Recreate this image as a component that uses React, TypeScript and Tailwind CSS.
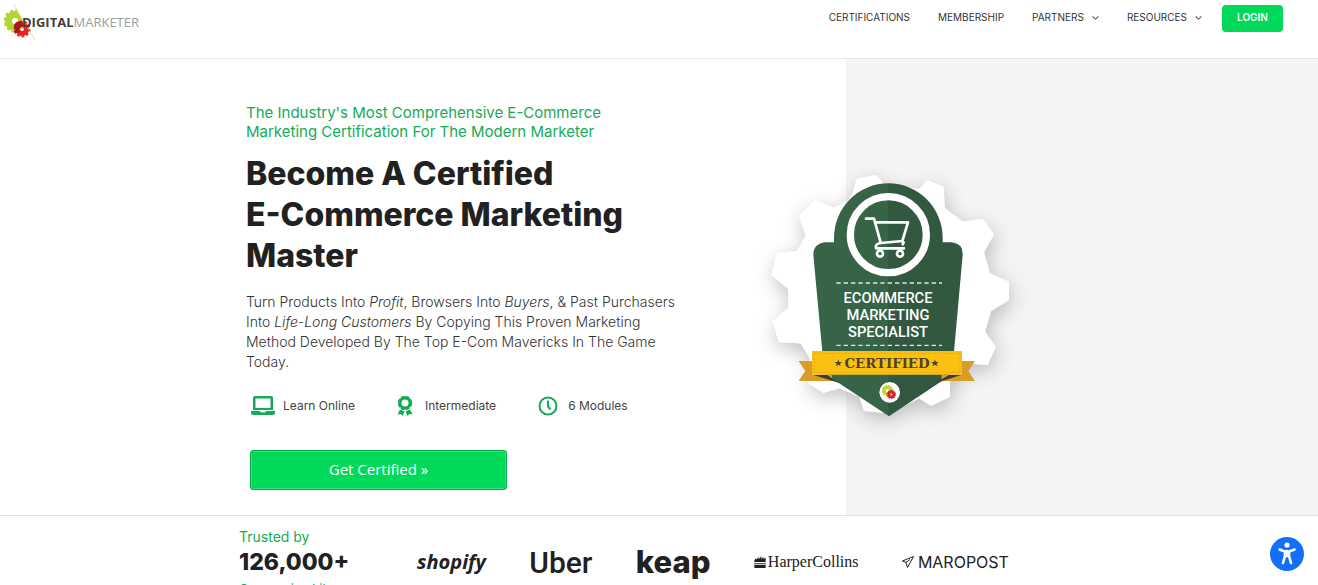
import { FaChevronDown } from "react-icons/fa6";

const navLinks = [
  { label: "Certifications", menu: false },
  { label: "Membership", menu: false },
  { label: "Partners", menu: true },
  { label: "Resources", menu: true },
];

function Gears() {
  return (
    <g>
      <circle cx="13" cy="15" r="6" fill="none" stroke="#bfd62f" strokeWidth="6" />
      <circle
        cx="13"
        cy="15"
        r="9"
        fill="none"
        stroke="#bfd62f"
        strokeWidth="3"
        strokeDasharray="2.8 1.91"
      />
      <circle cx="20" cy="22" r="4.500" fill="none" stroke="#e01f26" strokeWidth="5" />
      <circle
        cx="20"
        cy="22"
        r="7.500"
        fill="none"
        stroke="#e01f26"
        strokeWidth="2"
        strokeDasharray="2.7 2.01"
      />
    </g>
  );
}

function Logo() {
  return (
    <a href="#" aria-label="DigitalMarketer" className="flex items-center">
      <svg viewBox="0 0 32 36" className="h-9 w-8 shrink-0">
        <clipPath id="cut">
          <path d="M0 0H9L30 36H0Z" />
        </clipPath>
        <g clipPath="url(#cut)">
          <circle cx="11" cy="17" r="6.500" fill="none" stroke="#b5d334" strokeWidth="7" />
          <circle
            cx="11"
            cy="17"
            r="10"
            fill="none"
            stroke="#b5d334"
            strokeWidth="3"
            strokeDasharray="3.2 2.03"
          />
        </g>
        <circle cx="18" cy="25" r="4.500" fill="none" stroke="#ea2127" strokeWidth="5" />
        <circle
          cx="18"
          cy="25"
          r="7.500"
          fill="none"
          stroke="#ea2127"
          strokeWidth="2"
          strokeDasharray="2.7 2.01"
        />
        <path d="M10 21a8 8 0 0 1 7-4l4 6-3-1-3 3 1 3-5 1Z" fill="#a8181f" />
        <path d="M10 1 31 36" stroke="#c7dd63" strokeWidth="1" strokeDasharray="2 1" />
      </svg>
      <span className="-ml-3.5 font-['Open_Sans'] text-[13px] leading-none text-[#9b9c9e]">
        <b className="text-[#3f3f41]">DIGITAL</b>MARKETER
      </span>
    </a>
  );
}

function Header() {
  return (
    <header className="flex h-[59px] shrink-0 items-start justify-between border-b border-[#e6e6e6] pr-[35px] pl-1">
      <div className="pt-1">
        <Logo />
      </div>
      <nav className="flex items-center gap-7 pt-[5px]">
        {navLinks.map((link) => (
          <a
            key={link.label}
            href="#"
            className="flex items-center gap-2 pb-0.5 text-[10px] text-[#333] uppercase"
          >
            {link.label}
            {link.menu && <FaChevronDown className="size-[7px]" />}
          </a>
        ))}
        <a
          href="#"
          className="-ml-2 flex h-[27px] w-[61px] items-center justify-center rounded bg-[#00d95a] pb-0.5 text-[10px] font-semibold text-white"
        >
          LOGIN
        </a>
      </nav>
    </header>
  );
}

function Badge() {
  return (
    <svg
      viewBox="0 0 780 810"
      className="h-[270px] w-[260px] overflow-visible"
      role="img"
      aria-label="Ecommerce Marketing Specialist, Certified"
    >
      <defs>
        <filter id="shade" x="-20%" y="-20%" width="140%" height="140%">
          <feDropShadow dx="4" dy="18" stdDeviation="28" floodColor="#000" floodOpacity="0.24" />
        </filter>
        <linearGradient id="shield">
          <stop offset="50%" stopColor="#376346" />
          <stop offset="50%" stopColor="#325940" />
        </linearGradient>
      </defs>
      <path
        filter="url(#shade)"
        fill="#fff"
        d="M278 85 290 42 348 30 375 60 478 72 502 45 550 65 555 130 608 170 668 162 702 208 672 262 690 325 747 350V405L693 438 675 500 707 545 683 600 620 595 570 650V695L513 722 478 700 385 745 312 737 298 695 240 670 190 683 145 655 150 580 122 535 57 532 38 468 85 430V372L35 330 50 265 112 258 137 212 118 153 165 105 222 128 262 110Z"
      />
      <path
        fill="url(#shield)"
        d="M222 232V218A162 162 0 0 1 548 218V232H575Q610 236 608 270L582 560 600 600 550 645 387 754 215 640 160 600 187 560 160 270Q160 236 196 232Z"
      />
      <circle cx="385" cy="209" r="114" fill="none" stroke="#fff" strokeWidth="22" />
      <g fill="none" stroke="#fff" strokeWidth="8" strokeLinecap="round" strokeLinejoin="round">
        <path d="M318 161H342L362 233M349 172H444L427 228 362 234Q345 236 348 250H432M428 238 431 232" />
        <circle cx="360" cy="266" r="9" />
        <circle cx="420" cy="266" r="9" />
      </g>
      <g stroke="#dfe8e1" strokeWidth="4" strokeDasharray="13 9">
        <path d="M229 354H546" />
        <path d="M229 541H546" />
      </g>
      <g
        fill="#fff"
        textAnchor="middle"
        className="font-['Roboto'] text-[44px] font-medium"
      >
        <text x="384" y="413">ECOMMERCE</text>
        <text x="384" y="465">MARKETING</text>
        <text x="384" y="517">SPECIALIST</text>
      </g>
      <path fill="#d99c27" d="M116 588H158V630H216V648H116L136 618ZM645 588H605V630H545V648H645L625 618Z" />
      <path fill="#3b3c34" d="M158 629H200L240 655ZM606 629H568L525 655Z" />
      <path fill="#fbc112" d="M156 558H606V629H156Z" />
      <path fill="none" stroke="#d79c1c" strokeWidth="2" strokeDasharray="6 4" d="M162 565H600V622H162Z" />
      <path
        fill="#4b4330"
        d="m235 584 3 7h8l-6 5 2 8-7-5-7 5 2-8-6-5h8ZM525 584l3 7h8l-6 5 2 8-7-5-7 5 2-8-6-5h8Z"
      />
      <text
        x="381"
        y="608"
        fill="#4b4330"
        textAnchor="middle"
        className="font-['DejaVu_Serif'] text-[40px] font-bold"
      >
        CERTIFIED
      </text>
      <circle cx="389" cy="682" r="31" fill="#fff" />
      <g transform="translate(361 652) scale(1.65)">
        <Gears />
      </g>
    </svg>
  );
}

function LaptopIcon() {
  return (
    <svg viewBox="0 0 24 20" className="h-5 w-6 text-[#14ab55]">
      <path
        fill="currentColor"
        fillRule="evenodd"
        d="M4 0H20Q22 0 22 2V14H2V2Q2 0 4 0ZM4.500 2.500V12H19.500V2.500ZM0 15H9Q9.500 16.500 11 16.500H13Q14.500 16.500 15 15H24V16.500Q24 19 21.500 19H2.500Q0 19 0 16.500Z"
      />
    </svg>
  );
}

function AwardIcon() {
  return (
    <svg viewBox="0 0 16 20" className="h-5 w-4 text-[#14ab55]">
      <circle cx="8" cy="7" r="5" fill="none" stroke="currentColor" strokeWidth="3" />
      <circle
        cx="8"
        cy="7"
        r="6.500"
        fill="none"
        stroke="currentColor"
        strokeWidth="1.500"
        strokeDasharray="4.100 1"
      />
      <path fill="currentColor" d="M3 13.500 7.500 15.500 5.500 20 3.500 18 .500 18.500ZM13 13.500 8.500 15.500 10.500 20 12.500 18 15.500 18.500Z" />
    </svg>
  );
}

function ClockIcon() {
  return (
    <svg viewBox="0 0 20 20" className="size-5 text-[#14ab55]" fill="none" stroke="currentColor">
      <circle cx="10" cy="10" r="8.500" strokeWidth="2" />
      <path d="M10 4.500V10.500L12.500 13.500" strokeWidth="2" />
    </svg>
  );
}

function Hero() {
  return (
    <section className="shrink-0 border-b border-[#e2e2e2] bg-[linear-gradient(to_right,#fff_64.2%,#f4f4f4_64.2%)]">
      <div className="mx-auto flex max-w-[826px]">
        <div className="w-[56%] pt-11 pb-[25px]">
          <p className="text-[15px] leading-[19px] text-[#14ab55]">
            The Industry&apos;s Most Comprehensive E-Commerce
            <br />
            Marketing Certification For The Modern Marketer
          </p>
          <h1 className="mt-3 text-[32px] leading-[41px] font-extrabold text-[#212121]">
            Become A Certified
            <br />
            E-Commerce Marketing
            <br />
            Master
          </h1>
          <p className="mt-4 text-[14px] leading-5 font-light text-[#333]">
            Turn Products Into <em>Profit</em>, Browsers Into <em>Buyers</em>, &amp; Past Purchasers
            <br />
            Into <em>Life-Long Customers</em> By Copying This Proven Marketing
            <br />
            Method Developed By The Top E-Com Mavericks In The Game
            <br />
            Today.
          </p>
          <ul className="mt-[22px] flex gap-[42px] pl-[5px] text-[12px] leading-6 text-[#444]">
            <li className="flex items-center gap-2">
              <LaptopIcon />
              Learn Online
            </li>
            <li className="flex items-center gap-3">
              <AwardIcon />
              Intermediate
            </li>
            <li className="flex items-center gap-2.5">
              <ClockIcon />6 Modules
            </li>
          </ul>
          <button className="mt-8 ml-1 h-10 w-[257px] rounded-[3px] border border-[#00b04a] bg-[#00d95a] pb-0.5 font-['Open_Sans'] text-[15px] text-white shadow-[inset_0_0_0_1px_#2de27a]">
            Get Certified »
          </button>
        </div>
        <div className="flex flex-1 items-center justify-center pt-[26px]">
          <Badge />
        </div>
      </div>
    </section>
  );
}

function Trusted() {
  return (
    <section className="mx-auto flex w-full max-w-[840px] items-start pt-3">
      <div className="w-[178px] shrink-0">
        <p className="text-[14px] leading-[18px] text-[#14ab55]">Trusted by</p>
        <p className="text-[23px] leading-8 font-extrabold text-[#212121]">126,000+</p>
        <p className="mt-0.5 text-[13px] leading-[18px] text-[#14ab55]">Companies Like</p>
      </div>
      <div className="flex h-[68px] flex-1 items-center justify-between pr-[70px] text-[#212121]">
        <span className="font-['Open_Sans'] text-[20px] font-bold italic">shopify</span>
        <span className="font-['Roboto'] text-[30px] font-medium">Uber</span>
        <span className="text-[31px] font-extrabold">keap</span>
        <span className="flex items-center gap-0.5 font-['Liberation_Serif'] text-[16px]">
          <svg viewBox="0 0 36 36" className="size-3" fill="currentColor">
            <path d="M1 12 7 6 7 11 14 3 14 10 22 0 21 9 29 2 28 9 35 5V18H1ZM0 21H36V23H0ZM1 26H35V36H1Z" />
          </svg>
          HarperCollins
        </span>
        <span className="flex items-center gap-1 text-[16px]">
          <svg
            viewBox="0 0 12 12"
            className="size-3"
            fill="none"
            stroke="currentColor"
            strokeLinejoin="round"
          >
            <path d="M11.500 .500 .500 5 4 6.500 5.500 11.500ZM4 6.500 8 3.500" />
          </svg>
          MAROPOST
        </span>
      </div>
    </section>
  );
}

export default function App() {
  return (
    <div className="flex h-screen flex-col overflow-hidden bg-white font-['Inter',sans-serif]">
      <Header />
      <Hero />
      <Trusted />
      <button
        aria-label="Accessibility options"
        className="fixed right-[14px] bottom-[14px] flex size-[34px] items-center justify-center rounded-full bg-[#146ff8]"
      >
        <svg viewBox="0 0 24 24" className="size-6 text-white">
          <circle cx="12" cy="3" r="2.600" fill="currentColor" />
          <path
            d="M4.500 7.500 10 9.500V14L8 21M19.500 7.500 14 9.500V14L16 21M10 9.500H14M12 9V14"
            fill="none"
            stroke="currentColor"
            strokeWidth="2.600"
            strokeLinecap="round"
            strokeLinejoin="round"
          />
        </svg>
      </button>
    </div>
  );
}
